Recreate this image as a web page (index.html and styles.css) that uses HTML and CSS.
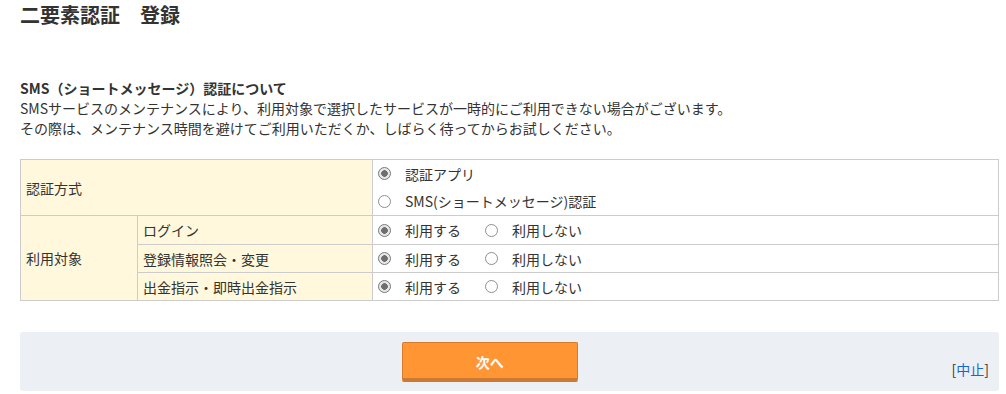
FILE: index.html
```html
<!DOCTYPE html>
<html lang="ja">
<head>
<meta charset="utf-8">
<title>二要素認証 登録</title>
<link rel="stylesheet" href="styles.css">
</head>
<body>
<div class="page">
  <h1 class="title">二要素認証　登録</h1>

  <section class="notice">
    <h2 class="notice-head">SMS（ショートメッセージ）認証について</h2>
    <p class="notice-text">SMSサービスのメンテナンスにより、利用対象で選択したサービスが一時的にご利用できない場合がございます。<br>その際は、メンテナンス時間を避けてご利用いただくか、しばらく待ってからお試しください。</p>
  </section>

  <table class="form-table">
    <colgroup>
      <col class="c1"><col class="c2"><col class="c3">
    </colgroup>
    <tr class="r1">
      <th colspan="2" class="th">認証方式</th>
      <td class="td">
        <div class="line">
          <label class="opt"><input type="radio" name="method" class="radio" checked><span>認証アプリ</span></label>
        </div>
        <div class="line">
          <label class="opt"><input type="radio" name="method" class="radio"><span>SMS(ショートメッセージ)認証</span></label>
        </div>
      </td>
    </tr>
    <tr class="r2">
      <th rowspan="3" class="th">利用対象</th>
      <th class="th">ログイン</th>
      <td class="td">
        <div class="line">
          <label class="opt"><input type="radio" name="login" class="radio" checked><span>利用する</span></label>
          <label class="opt"><input type="radio" name="login" class="radio"><span>利用しない</span></label>
        </div>
      </td>
    </tr>
    <tr class="r3">
      <th class="th">登録情報照会・変更</th>
      <td class="td">
        <div class="line">
          <label class="opt"><input type="radio" name="info" class="radio" checked><span>利用する</span></label>
          <label class="opt"><input type="radio" name="info" class="radio"><span>利用しない</span></label>
        </div>
      </td>
    </tr>
    <tr class="r3">
      <th class="th">出金指示・即時出金指示</th>
      <td class="td">
        <div class="line">
          <label class="opt"><input type="radio" name="pay" class="radio" checked><span>利用する</span></label>
          <label class="opt"><input type="radio" name="pay" class="radio"><span>利用しない</span></label>
        </div>
      </td>
    </tr>
  </table>

  <div class="actions">
    <div class="actions-main">
      <button type="button" class="btn-next">次へ</button>
    </div>
    <span class="cancel">[<a href="#" class="cancel-link">中止</a>]</span>
  </div>
</div>
</body>
</html>
```

FILE: styles.css
```css
html, body {
  margin: 0;
  padding: 0;
  background: #fff;
}

body {
  font-family: "Noto Sans CJK JP", "Noto Sans", sans-serif;
  color: #333;
  font-size: 14px;
}

.page {
  margin: 0 7px 0 20px;
}

.title {
  margin: 0;
  padding-top: 3px;
  font-size: 20px;
  line-height: 24px;
  font-weight: bold;
  color: #333;
}

.notice {
  margin-top: 51px;
}

.notice-head {
  margin: 0;
  font-size: 14px;
  line-height: 20px;
  font-weight: bold;
}

.notice-text {
  margin: 0;
  font-size: 14px;
  line-height: 20px;
}

.form-table {
  margin-top: 21px;
  width: 100%;
  border-collapse: collapse;
  border: 1px solid #ccc;
  table-layout: fixed;
}

.c1 { width: 117px; }
.c2 { width: 235px; }

.th, .td {
  border: 1px solid #ccc;
  padding: 0 0 0 5px;
  font-size: 14px;
  font-weight: normal;
  text-align: left;
  vertical-align: middle;
}

.th {
  background: #fff8dc;
}

.r1 .td, .r1 .th { height: 55px; }
.r2 .td, .r2 .th { height: 28px; }
.r3 .td, .r3 .th { height: 27px; }

.line {
  display: flex;
  align-items: center;
  height: 27px;
}

.r1 .line { height: 27.5px; }

.opt {
  display: inline-flex;
  align-items: center;
  margin-right: 24px;
  line-height: 20px;
}

.radio {
  -webkit-appearance: none;
  appearance: none;
  box-sizing: border-box;
  width: 13px;
  height: 13px;
  margin: 0 14px 0 0;
  border: 1px solid #8f8f8f;
  border-radius: 50%;
  background: #fff;
  flex: none;
}

.radio:checked {
  border-color: #7a7a7a;
  background: radial-gradient(circle, #6e6e6e 0 3px, #e6e6e6 3.6px);
}

.actions {
  margin-top: 31px;
  display: flex;
  align-items: flex-end;
  background: #ecf0f4;
  border-radius: 3px;
  padding: 10px 10px 12px 10px;
  height: 37px;
}

.actions-main {
  flex: 1;
  display: flex;
  justify-content: center;
  align-self: flex-start;
}

.btn-next {
  width: 176px;
  height: 40px;
  background: #ff9533;
  border: 1px solid #d67a2e;
  border-bottom: 4px solid #cc7932;
  border-radius: 2px;
  color: #fff;
  font-family: "Noto Sans CJK JP", "Noto Sans", sans-serif;
  font-size: 14px;
  font-weight: bold;
  padding: 2px 0 0 0;
}

.cancel {
  margin-left: 2px;
  font-size: 14px;
  line-height: 20px;
  color: #333;
}

.cancel-link {
  color: #1565d8;
  text-decoration: none;
}
```
